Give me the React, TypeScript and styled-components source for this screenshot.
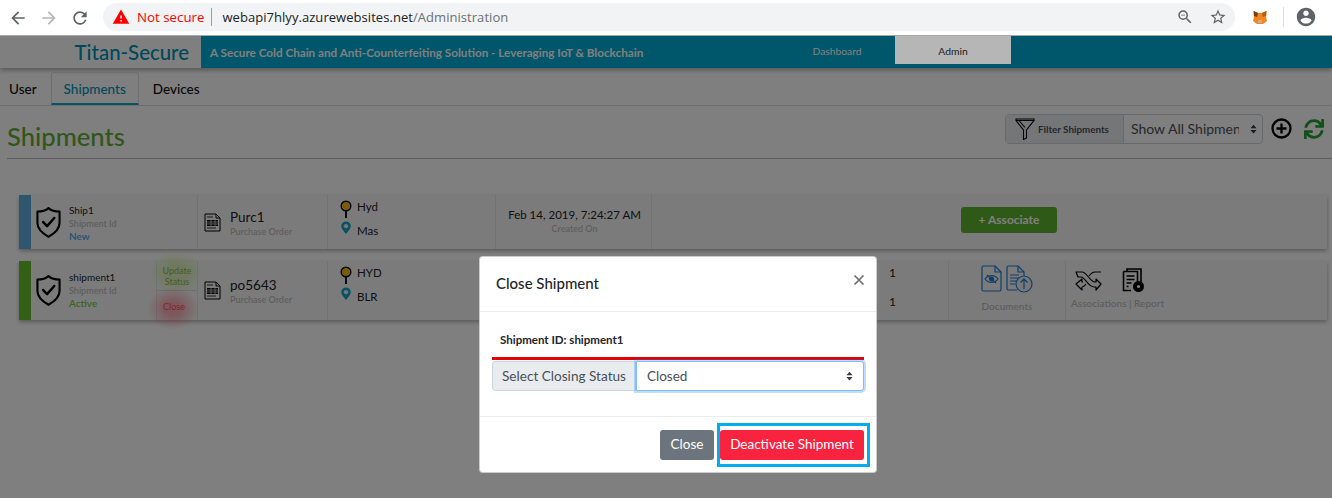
import React from 'react'
import styled, { createGlobalStyle } from 'styled-components'
import { FaSync } from 'react-icons/fa'

const GlobalStyle = createGlobalStyle`
  html, body { margin: 0; padding: 0; background: #fff; overflow: hidden; }
  body { font-family: "Lato", "Noto Sans", sans-serif; color: #212529; }
  * { box-sizing: border-box; }
`

const BackIcon = () => (
  <svg width="20" height="20" viewBox="0 0 24 24" fill="currentColor"><path d="M20 11H7.83l5.59-5.59L12 4l-8 8 8 8 1.41-1.41L7.83 13H20v-2z" /></svg>
)
const ForwardIcon = () => (
  <svg width="20" height="20" viewBox="0 0 24 24" fill="currentColor"><path d="M4 11h12.17l-5.59-5.59L12 4l8 8-8 8-1.41-1.41L16.17 13H4v-2z" /></svg>
)
const ReloadIcon = () => (
  <svg width="20" height="20" viewBox="0 0 24 24" fill="currentColor"><path d="M17.65 6.35A7.958 7.958 0 0012 4c-4.42 0-7.99 3.58-7.99 8s3.57 8 7.99 8c3.73 0 6.84-2.55 7.73-6h-2.08A5.99 5.99 0 0112 18c-3.31 0-6-2.69-6-6s2.69-6 6-6c1.66 0 3.14.69 4.22 1.78L13 11h7V4l-2.35 2.35z" /></svg>
)
const WarnIcon = () => (
  <svg width="18" height="18" viewBox="0 0 24 24" fill="#f00"><path d="M1 21h22L12 2 1 21zm12-3h-2v-2h2v2zm0-4h-2v-4h2v4z" /></svg>
)
const ZoomIcon = () => (
  <svg width="18" height="18" viewBox="0 0 24 24" fill="#5f6368"><path d="M15.5 14h-.79l-.28-.27A6.471 6.471 0 0016 9.5 6.5 6.5 0 109.5 16c1.61 0 3.09-.59 4.23-1.57l.27.28v.79l5 4.99L20.49 19l-4.99-5zm-6 0C7.01 14 5 11.99 5 9.5S7.01 5 9.5 5 14 7.01 14 9.5 11.99 14 9.5 14zM7 9h5v1H7z" /></svg>
)
const StarIcon = () => (
  <svg width="18" height="18" viewBox="0 0 24 24" fill="#5f6368"><path d="M22 9.24l-7.19-.62L12 2 9.19 8.63 2 9.24l5.46 4.73L5.82 21 12 17.27 18.18 21l-1.63-7.03L22 9.24zM12 15.4l-3.76 2.27 1-4.28-3.32-2.88 4.38-.38L12 6.1l1.71 4.04 4.38.38-3.32 2.88 1 4.28L12 15.4z" /></svg>
)
const AccountIcon = () => (
  <svg width="22" height="22" viewBox="0 0 24 24" fill="#5f6368"><path d="M12 2C6.48 2 2 6.48 2 12s4.48 10 10 10 10-4.48 10-10S17.52 2 12 2zm0 3c1.66 0 3 1.34 3 3s-1.34 3-3 3-3-1.34-3-3 1.34-3 3-3zm0 14.2c-2.5 0-4.71-1.28-6-3.22.03-1.99 4-3.08 6-3.08 1.99 0 5.97 1.09 6 3.08-1.29 1.94-3.5 3.22-6 3.22z" /></svg>
)
const FoxIcon = () => (
  <svg width="16" height="16" viewBox="0 0 16 16">
    <path d="M1 2l5 2h4l5-2-1 6 1 4-4 3H5l-4-3 1-4z" fill="#f6851b" />
    <path d="M2 2l4 2-1 4-3-1z" fill="#763d16" />
    <path d="M14 2l-4 2 1 4 3-1z" fill="#a85f25" />
    <path d="M6 11h4v3H6z" fill="#c0ad9e" />
  </svg>
)
const ShieldIcon = () => (
  <svg width="25" height="33" viewBox="0 0 26 33" fill="none" stroke="#000" strokeWidth="2.2" strokeLinejoin="round" strokeLinecap="round">
    <path d="M13 1.5c3 2.6 7 3.6 11.5 3.6v12c0 6.5-4.8 10.6-11.5 14.2C6.300 27.700 1.500 23.600 1.500 17.100v-12C6 5.100 10 4.100 13 1.500z" />
    <path d="M7.500 16l4 4.200 7.500-8.400" strokeWidth="2.600" />
  </svg>
)
const OrderIcon = () => (
  <svg width="17" height="19" viewBox="0 0 17 19" fill="none" stroke="#000" strokeWidth="1">
    <path d="M1 1h11l4 4v13H1z" />
    <path d="M12 1v4h4" />
    <path d="M3 4h6M3 15h9" strokeWidth="0.800" />
    <path d="M3 7h11v6H3z" fill="#000" stroke="none" />
    <path d="M3 9h11M3 11h11M7 7v6M11 7v6" stroke="#ddd" strokeWidth="0.800" />
  </svg>
)
const DotIcon = () => (
  <svg width="14" height="18" viewBox="0 0 14 18">
    <circle cx="7" cy="6" r="4.800" fill="#f5b90f" stroke="#000" strokeWidth="1.400" />
    <path d="M7 11V18" stroke="#000" strokeWidth="1.800" />
  </svg>
)
const PinIcon = () => (
  <svg width="14" height="13" viewBox="0 0 14 15">
    <path d="M7 15C4 11 1.500 8.600 1.500 6a5.500 5.500 0 0111 0C12.500 8.600 10 11 7 15z" fill="#12a5c8" />
    <circle cx="7" cy="6" r="2.500" fill="#eee" />
  </svg>
)
const FilterIcon = () => (
  <svg width="20" height="22" viewBox="0 0 20 22" fill="none" stroke="#000" strokeWidth="1.100">
    <path d="M1 1h18v1.500L11.500 12v8L8.500 21.500V12L1 2.500zM1 2.500h18M4 2.500l6 7" />
  </svg>
)
const PlusIcon = () => (
  <svg width="21" height="21" viewBox="0 0 21 21" fill="none" stroke="#000" strokeWidth="2.300">
    <circle cx="10.500" cy="10.500" r="9" />
    <path d="M10.500 5.500v10M5.500 10.500h10" />
  </svg>
)
const ViewDocIcon = () => (
  <svg width="21" height="27" viewBox="0 0 21 27" fill="none" stroke="#1c7ed6" strokeWidth="1.200" strokeLinejoin="round">
    <path d="M2.500 1h11.500l6 6v17.500a1.500 1.500 0 01-1.500 1.500h-16A1.500 1.500 0 011 24.500v-22A1.500 1.500 0 012.500 1z" />
    <path d="M14 1v6h6" />
    <path d="M4 14c3-4.500 10-4.500 13 0-3 4.500-10 4.500-13 0z" />
    <circle cx="10.500" cy="14" r="2" fill="#1c7ed6" />
    <path d="M6 10l9 8" />
  </svg>
)
const UploadDocIcon = () => (
  <svg width="27" height="28" viewBox="0 0 27 28" fill="none" stroke="#1c7ed6" strokeWidth="1.200" strokeLinejoin="round">
    <path d="M11 25H2.500A1.500 1.500 0 011 23.500v-21A1.500 1.500 0 012.500 1H12l6 6v6" />
    <path d="M12 1v6h6" />
    <path d="M4 10h9M4 13h11M4 16h7M4 19h5" />
    <circle cx="18" cy="19" r="8" fill="#eee" />
    <path d="M18 24v-10M14.500 17.500L18 14l3.500 3.500" />
  </svg>
)
const SwapIcon = () => (
  <svg width="27" height="24" viewBox="0 0 27 24" fill="none" stroke="#000" strokeWidth="1.200" strokeLinejoin="round">
    <path d="M1 3h6c5 0 8 10 13 10h1v-3l5 5-5 6v-3h-2C13 18 10 8 6 8H3z" />
    <path d="M26 3h-6c-2.500 0-4.500 2-6 4M11 15c-1 1-2 3-4 3v3l-6-6 6-5v3h1" />
  </svg>
)
const ReportIcon = () => (
  <svg width="23" height="25" viewBox="0 0 23 25" fill="none" stroke="#000" strokeWidth="1.600">
    <path d="M5 3V1h14v14" />
    <path d="M1.500 3.500h14v13M9 22.500H1.500v-19" />
    <path d="M4.500 8h8M4.500 11.500h8M4.500 15h5M4.500 18.500h2" />
    <circle cx="16.500" cy="18.500" r="5.500" fill="#000" stroke="none" />
    <circle cx="16.500" cy="18.500" r="1.600" fill="#fff" stroke="none" />
  </svg>
)
const SortCaret = () => (
  <svg width="7" height="10" viewBox="0 0 8 10" fill="#343a40"><path d="M4 0l3.500 4h-7zM4 10L.5 6h7z" /></svg>
)

const Toolbar = styled.div`
  height: 36px;
  display: flex;
  align-items: center;
  background: #fff;
  border-bottom: 1px solid #a8a8a8;
`
const NavButton = styled.div<{ $dim?: boolean }>`
  width: 31px;
  display: flex;
  justify-content: center;
  color: ${p => (p.$dim ? '#b4b6b8' : '#5f6368')};
`
const NavButtons = styled.div`
  width: 103px;
  display: flex;
  padding-left: 2px;
`
const Omnibox = styled.div`
  width: 1132px;
  height: 28px;
  margin-top: -2px;
  display: flex;
  align-items: center;
  background: #f1f3f4;
  border-radius: 14px;
  padding-left: 9px;
  font-family: "Open Sans", sans-serif;
  font-size: 13px;
`
const NotSecure = styled.span`
  color: #f00;
  margin-left: 7px;
  padding-right: 7px;
  border-right: 1px solid #9aa0a6;
  line-height: 18px;
  font-size: 13.300px;
`
const Url = styled.span`
  margin-left: 10px;
  color: #202124;
  letter-spacing: 0.05px;
  span { color: #6c7073; }
`
const OmniRight = styled.div`
  margin-left: auto;
  display: flex;
  gap: 15px;
  padding-right: 8px;
`
const ToolbarEnd = styled.div`
  flex: 1;
  display: flex;
  align-items: center;
  justify-content: flex-end;
  padding-right: 15px;
  margin-top: -2px;
`
const ExtDivider = styled.i`
  width: 1px;
  height: 20px;
  background: #dadce0;
  margin: 0 11px 0 15px;
`

const Screen = styled.div`
  position: relative;
  height: 462px;
  overflow: hidden;
  background: #fff;
`
const Header = styled.header`
  height: 32px;
  display: flex;
  background: #fff;
  box-shadow: 0 2px 5px rgba(0, 0, 0, 0.35);
`
const Brand = styled.div`
  width: 201px;
  padding-right: 12px;
  text-align: right;
  font-size: 20.400px;
  line-height: 33px;
  font-weight: 500;
  color: #0090b4;
  white-space: nowrap;
`
const HeaderBar = styled.div`
  flex: 1;
  display: flex;
  justify-content: space-between;
  background: #00acd4;
  padding-left: 9px;
  padding-right: 321px;
`
const Tagline = styled.div`
  font-size: 11.700px;
  font-weight: 700;
  line-height: 32px;
  color: #fff;
`
const HeaderNav = styled.nav`
  display: flex;
`
const HeaderLink = styled.div`
  width: 116px;
  height: 28px;
  line-height: 30px;
  text-align: center;
  font-size: 10.300px;
  color: #fff;
`
// this one tab stays light above the modal backdrop in the reference
const ActiveHeaderLink = styled(HeaderLink)`
  position: relative;
  z-index: 3;
  background: #b6b6b6;
  color: #1b1b1b;
`
const Tabs = styled.div`
  height: 34px;
  margin-top: 4px;
  display: flex;
  border-bottom: 1px solid #ddd;
`
const Tab = styled.div<{ $active?: boolean }>`
  padding: 0 ${p => (p.$active ? '12px' : '8px')};
  margin-right: 5px;
  font-size: 13.500px;
  font-weight: 500;
  line-height: 32px;
  color: ${p => (p.$active ? '#0092b8' : '#111')};
  border: 1px solid ${p => (p.$active ? '#ddd' : 'transparent')};
  border-bottom: ${p => (p.$active ? '2px solid #10a6c9' : '0')};
  border-radius: 3px 3px 0 0;
`
const TitleRow = styled.div`
  margin-left: 7px;
  height: 53px;
  display: flex;
  align-items: center;
  justify-content: space-between;
  border-bottom: 1px solid #bbb;
`
const PageTitle = styled.h1`
  margin: 8px 0 0;
  font-size: 25.600px;
  font-weight: 500;
  color: #62ad34;
`
const TitleTools = styled.div`
  display: flex;
  align-items: center;
  margin-top: -7px;
  svg { display: block; }
`
const FilterGroup = styled.div`
  width: 258px;
  height: 30px;
  display: flex;
  border: 1px solid #ced4da;
  border-radius: 4px;
  background: #fff;
`
const FilterLabel = styled.div`
  width: 118px;
  display: flex;
  align-items: center;
  gap: 3px;
  padding-left: 9px;
  background: #e9ecef;
  border-right: 1px solid #ced4da;
  font-size: 9.800px;
  font-weight: 700;
  color: #495057;
  white-space: nowrap;
`
const FilterValue = styled.div`
  flex: 1;
  display: flex;
  align-items: center;
  justify-content: space-between;
  padding: 0 5px 0 7px;
  font-size: 14px;
  color: #495057;
  white-space: nowrap;
  overflow: hidden;
`
const ClippedValue = styled.span`
  width: 108px;
  overflow: hidden;
`
const AddTool = styled.div`
  margin-left: 8px;
`
const SyncTool = styled.div`
  margin: 0 8px 0 12px;
  color: #23a032;
  font-size: 20px;
  display: flex;
`
const List = styled.div`
  padding: 36px 5px 0 19px;
  display: flex;
  flex-direction: column;
  gap: 12px;
`
const Card = styled.div<{ $height: number; $tail: string; $accent: string }>`
  height: ${p => p.$height}px;
  display: grid;
  grid-template-columns: 167px 130px 168px ${p => p.$tail};
  background: #f7f7f7;
  border-left: 12px solid ${p => p.$accent};
  box-shadow: 0 2px 4px rgba(0, 0, 0, 0.3);
`
const Cell = styled.div`
  display: flex;
  align-items: center;
  border-right: 1px solid #e4e4e4;
  min-width: 0;
`
const IdCell = styled(Cell)`
  padding-left: 5px;
  gap: 8px;
`
const IdText = styled.div<{ $drop?: number }>`
  flex: 1;
  padding-top: ${p => p.$drop ?? 0}px;
  font-size: 10px;
  line-height: 13px;
`
const Muted = styled.div`
  color: #bdbdbd;
  font-size: 9px;
  font-weight: 600;
`
const WideMuted = styled(Muted)`
  font-size: 10px;
`
const Status = styled.div<{ $color: string }>`
  color: ${p => p.$color};
  font-size: 10px;
  font-weight: 600;
`
const RowActions = styled.div`
  width: 41px;
  align-self: stretch;
  display: flex;
  flex-direction: column;
  border-left: 1px solid #e4e4e4;
`
const UpdateAction = styled.div`
  position: relative;
  z-index: 0;
  height: 30px;
  padding-top: 5px;
  text-align: center;
  font-size: 9px;
  line-height: 10.500px;
  color: #8bb84a;
  border-bottom: 1px solid #ddd;
  &::before {
    content: '';
    position: absolute;
    z-index: -1;
    inset: -10px -6px -4px -8px;
    background: radial-gradient(closest-side, rgba(175, 235, 70, 0.32) 40%, rgba(175, 235, 70, 0));
  }
`
const CloseAction = styled.div`
  position: relative;
  z-index: 0;
  flex: 1;
  padding: 10px 0 0 6px;
  font-size: 9px;
  color: #ff4a5e;
  &::before {
    content: '';
    position: absolute;
    z-index: -1;
    inset: -4px -2px -10px -10px;
    background: radial-gradient(closest-side, rgba(255, 50, 70, 0.36) 30%, rgba(255, 50, 70, 0));
  }
`
const OrderCell = styled(Cell)`
  padding-left: 6px;
  gap: 9px;
`
const OrderName = styled.div`
  font-size: 13.500px;
  line-height: 18px;
  color: #222;
`
const RouteCell = styled(Cell)`
  align-items: flex-start;
  padding: 5px 0 0 11px;
  gap: 4px;
`
const RouteIcons = styled.div`
  display: flex;
  flex-direction: column;
  gap: 3px;
  svg { display: block; }
`
const RouteNames = styled.div`
  margin-top: -5px;
  font-size: 11.500px;
  line-height: 24px;
  color: #222;
`
const CreatedCell = styled(Cell)`
  flex-direction: column;
  justify-content: center;
  padding-left: 2px;
  font-size: 11.500px;
  line-height: 14px;
  color: #222;
`
const AssociateCell = styled.div`
  display: flex;
  align-items: center;
  justify-content: center;
  padding-left: 39px;
`
const AssociateButton = styled.div`
  width: 96px;
  height: 26px;
  margin-top: -5px;
  border-radius: 3px;
  background: #5fb22e;
  color: #fff;
  font-size: 12px;
  font-weight: 700;
  line-height: 26px;
  text-align: center;
`
const CountCell = styled(Cell)`
  flex-direction: column;
  align-items: flex-end;
  gap: 15px;
  padding: 5px 52px 0 0;
  font-size: 12px;
  line-height: 14px;
  color: #222;
`
const DocsCell = styled(Cell)`
  flex-direction: column;
  justify-content: center;
  gap: 7px;
  padding-bottom: 5px;
`
const IconRow = styled.div<{ $gap: number }>`
  display: flex;
  align-items: center;
  gap: ${p => p.$gap}px;
  svg { display: block; }
`
const ToolsCell = styled.div`
  display: flex;
  flex-direction: column;
  justify-content: center;
  gap: 4px;
  padding: 0 0 4px 5px;
`
const ToolsIcons = styled(IconRow)`
  padding-left: 4px;
`

const Backdrop = styled.div`
  position: absolute;
  inset: 0;
  z-index: 2;
  background: rgba(0, 0, 0, 0.5);
`
const Modal = styled.div`
  position: absolute;
  z-index: 4;
  left: 479px;
  top: 220px;
  width: 398px;
  height: 217px;
  display: flex;
  flex-direction: column;
  background: #fff;
  border-radius: 4px;
  border: 1px solid rgba(0, 0, 0, 0.2);
`
const ModalHeader = styled.div`
  height: 55px;
  flex: none;
  display: flex;
  justify-content: space-between;
  padding: 0 11px 0 16px;
  border-bottom: 1px solid #e9ecef;
`
const ModalTitle = styled.h5`
  margin: 0;
  font-size: 15px;
  font-weight: 500;
  line-height: 53px;
  color: #212529;
`
const CloseX = styled.svg`
  margin-top: 17px;
`
const ModalBody = styled.div`
  flex: 1;
  padding: 20px 12px 0;
`
const IdLine = styled.div`
  padding: 0 8px;
  height: 25px;
  font-size: 11.500px;
  font-weight: 700;
  line-height: 16px;
  color: #212529;
`
const StatusGroup = styled.div`
  display: flex;
  padding-top: 1px;
  border-top: 3px solid #e30000;
`
const StatusLabel = styled.div`
  width: 144px;
  height: 30px;
  padding-left: 9px;
  background: #e9ecef;
  border: 1px solid #ced4da;
  border-radius: 3px 0 0 4px;
  font-size: 13.600px;
  line-height: 28px;
  color: #495057;
`
const StatusSelect = styled.div`
  flex: 1;
  height: 30px;
  display: flex;
  align-items: center;
  justify-content: space-between;
  padding: 0 10px;
  background: #fff;
  border: 1px solid #80bdff;
  border-radius: 0 3px 3px 0;
  box-shadow: 0 0 0 2px rgba(0, 123, 255, 0.25);
  font-size: 13.500px;
  color: #495057;
`
const ModalFooter = styled.div`
  position: relative;
  height: 56px;
  flex: none;
  display: flex;
  justify-content: flex-end;
  gap: 6px;
  padding: 13px 12px 0;
  border-top: 1px solid #e9ecef;
`
const Button = styled.div<{ $bg: string; $width: number }>`
  width: ${p => p.$width}px;
  height: 30px;
  border-radius: 3px;
  background: ${p => p.$bg};
  color: #fff;
  font-size: 13.500px;
  line-height: 28px;
  text-align: center;
  white-space: nowrap;
`
const Highlight = styled.div`
  position: absolute;
  left: 237px;
  top: 6px;
  width: 153px;
  height: 44px;
  border: 3px solid #00aeef;
`

export default function App() {
  return (
    <>
      <GlobalStyle />
      <Toolbar>
        <NavButtons>
          <NavButton><BackIcon /></NavButton>
          <NavButton $dim><ForwardIcon /></NavButton>
          <NavButton><ReloadIcon /></NavButton>
        </NavButtons>
        <Omnibox>
          <WarnIcon />
          <NotSecure>Not secure</NotSecure>
          <Url>webapi7hlyy.azurewebsites.net<span>/Administration</span></Url>
          <OmniRight><ZoomIcon /><StarIcon /></OmniRight>
        </Omnibox>
        <ToolbarEnd>
          <FoxIcon />
          <ExtDivider />
          <AccountIcon />
        </ToolbarEnd>
      </Toolbar>
      <Screen>
        <Header>
          <Brand>Titan-Secure</Brand>
          <HeaderBar>
            <Tagline>A Secure Cold Chain and Anti-Counterfeiting Solution - Leveraging IoT &amp; Blockchain</Tagline>
            <HeaderNav>
              <HeaderLink>Dashboard</HeaderLink>
              <ActiveHeaderLink>Admin</ActiveHeaderLink>
            </HeaderNav>
          </HeaderBar>
        </Header>
        <Tabs>
          <Tab>User</Tab>
          <Tab $active>Shipments</Tab>
          <Tab>Devices</Tab>
        </Tabs>
        <TitleRow>
          <PageTitle>Shipments</PageTitle>
          <TitleTools>
            <FilterGroup>
              <FilterLabel><FilterIcon />Filter Shipments</FilterLabel>
              <FilterValue><ClippedValue>Show All Shipments</ClippedValue><SortCaret /></FilterValue>
            </FilterGroup>
            <AddTool><PlusIcon /></AddTool>
            <SyncTool><FaSync /></SyncTool>
          </TitleTools>
        </TitleRow>
        <List>
          <Card $height={54} $tail="156px 1fr" $accent="#5cacdf">
            <IdCell>
              <ShieldIcon />
              <IdText $drop={3}>
                Ship1
                <Muted>Shipment Id</Muted>
                <Status $color="#4aa3e8">New</Status>
              </IdText>
            </IdCell>
            <OrderCell>
              <OrderIcon />
              <div><OrderName>Purc1</OrderName><Muted>Purchase Order</Muted></div>
            </OrderCell>
            <RouteCell>
              <RouteIcons><DotIcon /><PinIcon /></RouteIcons>
              <RouteNames>Hyd<br />Mas</RouteNames>
            </RouteCell>
            <CreatedCell>
              Feb 14, 2019, 7:24:27 AM
              <Muted>Created On</Muted>
            </CreatedCell>
            <AssociateCell><AssociateButton>+ Associate</AssociateButton></AssociateCell>
          </Card>
          <Card $height={59} $tail="453px 117px 1fr" $accent="#66bf2e">
            <IdCell>
              <ShieldIcon />
              <IdText>
                shipment1
                <Muted>Shipment Id</Muted>
                <Status $color="#7ac943">Active</Status>
              </IdText>
              <RowActions>
                <UpdateAction>Update Status</UpdateAction>
                <CloseAction>Close</CloseAction>
              </RowActions>
            </IdCell>
            <OrderCell>
              <OrderIcon />
              <div><OrderName>po5643</OrderName><Muted>Purchase Order</Muted></div>
            </OrderCell>
            <RouteCell>
              <RouteIcons><DotIcon /><PinIcon /></RouteIcons>
              <RouteNames>HYD<br />BLR</RouteNames>
            </RouteCell>
            <CountCell><div>1</div><div>1</div></CountCell>
            <DocsCell>
              <IconRow $gap={4}><ViewDocIcon /><UploadDocIcon /></IconRow>
              <WideMuted>Documents</WideMuted>
            </DocsCell>
            <ToolsCell>
              <ToolsIcons $gap={20}><SwapIcon /><ReportIcon /></ToolsIcons>
              <WideMuted>Associations | Report</WideMuted>
            </ToolsCell>
          </Card>
        </List>
        <Backdrop />
        <Modal>
          <ModalHeader>
            <ModalTitle>Close Shipment</ModalTitle>
            <CloseX width="12" height="12" viewBox="0 0 12 12" stroke="#6e6e6e" strokeWidth="1.700"><path d="M1.500 1.500l9 9M10.500 1.500l-9 9" /></CloseX>
          </ModalHeader>
          <ModalBody>
            <IdLine>Shipment ID: shipment1</IdLine>
            <StatusGroup>
              <StatusLabel>Select Closing Status</StatusLabel>
              <StatusSelect>Closed<SortCaret /></StatusSelect>
            </StatusGroup>
          </ModalBody>
          <ModalFooter>
            <Button $bg="#6c757d" $width={54}>Close</Button>
            <Button $bg="#f8233f" $width={144}>Deactivate Shipment</Button>
            <Highlight />
          </ModalFooter>
        </Modal>
      </Screen>
    </>
  )
}
